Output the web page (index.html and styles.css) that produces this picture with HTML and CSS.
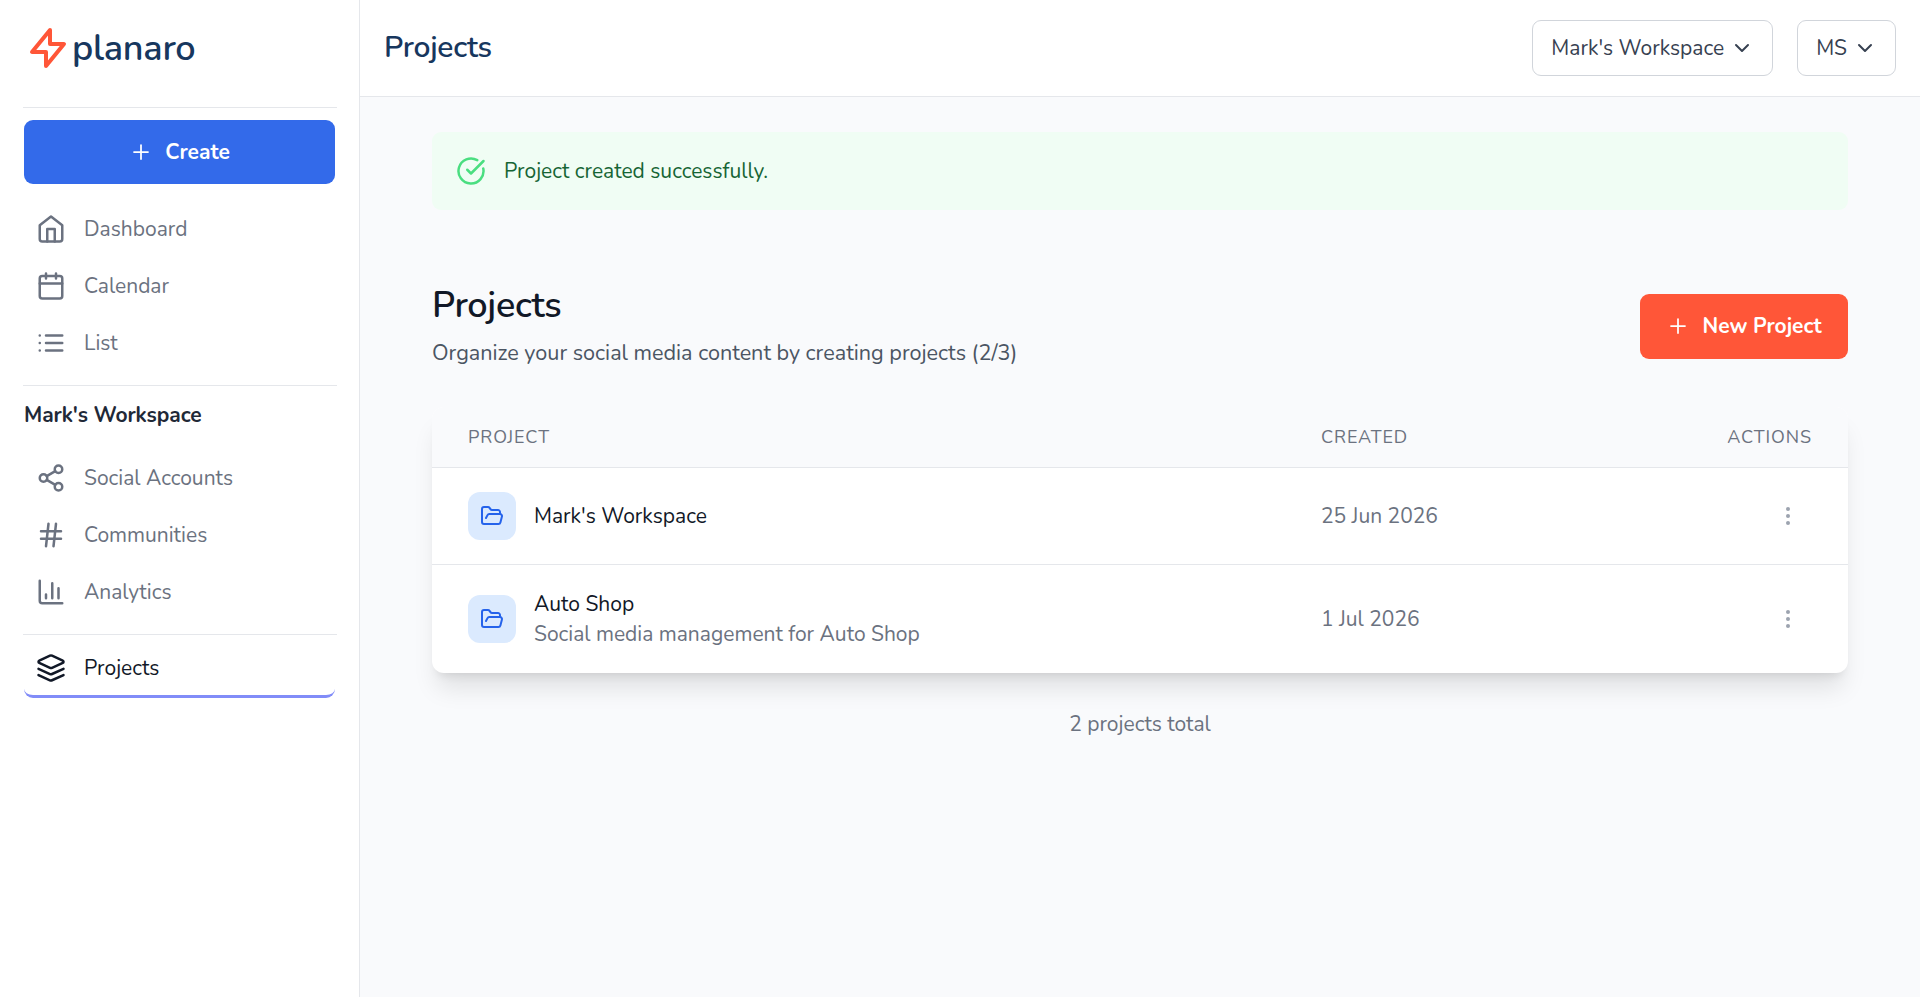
FILE: index.html
```html
<!DOCTYPE html>
<html lang="en">
<head>
    <meta charset="UTF-8">
    <meta name="viewport" content="width=device-width, initial-scale=1.0">
    <title>Projects</title>
    <link rel="stylesheet" href="styles.css">
</head>
<body>
    <aside class="sidebar">
        <a class="logo">
            <svg class="logo-icon" viewBox="0 0 24 24"><path d="M13 10V3L4 14h7v7l9-11h-7z"/></svg>
            <span class="logo-text">planaro</span>
        </a>
        <hr>
        <button class="btn btn-create">
            <svg viewBox="0 0 24 24"><path d="M5 12h14M12 5v14"/></svg>
            <span>Create</span>
        </button>
        <nav class="nav">
            <a class="nav-item">
                <svg viewBox="0 0 24 24"><path d="m3 9 9-7 9 7v11a2 2 0 0 1-2 2H5a2 2 0 0 1-2-2z"/><path d="M9 22V12h6v10"/></svg>
                <span>Dashboard</span>
            </a>
            <a class="nav-item">
                <svg viewBox="0 0 24 24"><rect x="3" y="4" width="18" height="18" rx="2"/><path d="M16 2v4M8 2v4M3 10h18"/></svg>
                <span>Calendar</span>
            </a>
            <a class="nav-item">
                <svg viewBox="0 0 24 24"><path d="M8 6h13M8 12h13M8 18h13M3 6h.01M3 12h.01M3 18h.01"/></svg>
                <span>List</span>
            </a>
        </nav>
        <hr>
        <h2 class="nav-heading">Mark's Workspace</h2>
        <nav class="nav nav-workspace">
            <a class="nav-item">
                <svg viewBox="0 0 24 24"><circle cx="18" cy="5" r="3"/><circle cx="6" cy="12" r="3"/><circle cx="18" cy="19" r="3"/><path d="m8.59 13.51 6.83 3.98M15.41 6.51l-6.82 3.98"/></svg>
                <span>Social Accounts</span>
            </a>
            <a class="nav-item">
                <svg viewBox="0 0 24 24"><path d="M4 9h16M4 15h16M10 3 8 21M16 3l-2 18"/></svg>
                <span>Communities</span>
            </a>
            <a class="nav-item">
                <svg viewBox="0 0 24 24"><path d="M3 3v16a2 2 0 0 0 2 2h16M18 17V9M13 17V5M8 17v-3"/></svg>
                <span>Analytics</span>
            </a>
        </nav>
        <hr>
        <nav class="nav nav-bottom">
            <a class="nav-item active">
                <svg viewBox="0 0 24 24"><path d="m12.83 2.18a2 2 0 0 0-1.66 0L2.6 6.08a1 1 0 0 0 0 1.83l8.58 3.91a2 2 0 0 0 1.66 0l8.58-3.9a1 1 0 0 0 0-1.83Z"/><path d="m22 12.65-9.17 4.16a2 2 0 0 1-1.66 0L2 12.65"/><path d="m22 17.65-9.17 4.16a2 2 0 0 1-1.66 0L2 17.65"/></svg>
                <span>Projects</span>
            </a>
        </nav>
    </aside>

    <div class="page">
        <header class="topbar">
            <h1>Projects</h1>
            <div class="topbar-menus">
                <button class="dropdown"><span>Mark's Workspace</span><svg viewBox="0 0 20 20"><path d="M4 7l6 6 6-6"/></svg></button>
                <button class="dropdown"><span>MS</span><svg viewBox="0 0 20 20"><path d="M4 7l6 6 6-6"/></svg></button>
            </div>
        </header>

        <main class="content">
            <div class="alert">
                <svg viewBox="0 0 24 24"><path d="M21.801 10A10 10 0 1 1 17 3.335"/><path d="m9 11 3 3L22 4"/></svg>
                <span>Project created successfully.</span>
            </div>

            <div class="page-head">
                <div>
                    <h2>Projects</h2>
                    <p>Organize your social media content by creating projects (2/3)</p>
                </div>
                <button class="btn btn-new">
                    <svg viewBox="0 0 24 24"><path d="M5 12h14M12 5v14"/></svg>
                    <span>New Project</span>
                </button>
            </div>

            <div class="table">
                <div class="row row-head">
                    <span>Project</span>
                    <span>Created</span>
                    <span class="actions">Actions</span>
                </div>
                <div class="row">
                    <div class="project">
                        <div class="tile"><svg viewBox="0 0 24 24"><path d="m6 14 1.5-2.9A2 2 0 0 1 9.24 10H20a2 2 0 0 1 1.94 2.5l-1.54 6a2 2 0 0 1-1.95 1.5H4a2 2 0 0 1-2-2V5a2 2 0 0 1 2-2h3.9a2 2 0 0 1 1.69.9l.81 1.2a2 2 0 0 0 1.67.9H18a2 2 0 0 1 2 2v2"/></svg></div>
                        <div class="project-name">Mark's Workspace</div>
                    </div>
                    <span class="date">25 Jun 2026</span>
                    <div class="actions"><svg class="dots" viewBox="0 0 24 24"><circle cx="12" cy="5" r="2"/><circle cx="12" cy="12" r="2"/><circle cx="12" cy="19" r="2"/></svg></div>
                </div>
                <div class="row">
                    <div class="project">
                        <div class="tile"><svg viewBox="0 0 24 24"><path d="m6 14 1.5-2.9A2 2 0 0 1 9.24 10H20a2 2 0 0 1 1.94 2.5l-1.54 6a2 2 0 0 1-1.95 1.5H4a2 2 0 0 1-2-2V5a2 2 0 0 1 2-2h3.9a2 2 0 0 1 1.69.9l.81 1.2a2 2 0 0 0 1.67.9H18a2 2 0 0 1 2 2v2"/></svg></div>
                        <div>
                            <div class="project-name">Auto Shop</div>
                            <div class="project-desc">Social media management for Auto Shop</div>
                        </div>
                    </div>
                    <span class="date">1 Jul 2026</span>
                    <div class="actions"><svg class="dots" viewBox="0 0 24 24"><circle cx="12" cy="5" r="2"/><circle cx="12" cy="12" r="2"/><circle cx="12" cy="19" r="2"/></svg></div>
                </div>
            </div>

            <p class="total">2 projects total</p>
        </main>
    </div>
</body>
</html>
```
FILE: styles.css
```css
* {
    box-sizing: border-box;
}
body {
    margin: 0;
    display: flex;
    min-height: 100vh;
    font-family: Nunito, Lato, sans-serif;
    font-size: 21px;
    line-height: 30px;
    color: #111827;
    background-color: #f9fafc;
}
h1, h2, p {
    margin: 0;
}
button {
    font: inherit;
}
svg {
    flex: none;
    fill: none;
    stroke: currentColor;
    stroke-width: 2;
    stroke-linecap: round;
    stroke-linejoin: round;
}
hr {
    width: 314px;
    height: 1px;
    margin: 0 -1px;
    border: 0;
    background-color: #e5e7eb;
}

/* Sidebar */
.sidebar {
    width: 360px;
    flex: none;
    padding: 0 24px;
    border-right: 1px solid #e5e7eb;
    background-color: #fff;
}
.logo {
    display: flex;
    align-items: center;
    height: 107px;
    padding-bottom: 11px;
}
.logo-icon {
    width: 48px;
    height: 48px;
    color: #ff5638;
}
.logo-text {
    padding-top: 2px;
    font-size: 36px;
    font-weight: 600;
    letter-spacing: -0.25px;
    color: #17375e;
}
.btn {
    display: flex;
    align-items: center;
    justify-content: center;
    gap: 12px;
    border: 0;
    border-radius: 9px;
    color: #fff;
    font-weight: 700;
}
.btn svg {
    width: 24px;
    height: 24px;
    stroke-width: 1.75;
}
.btn-create {
    width: 311px;
    height: 64px;
    margin: 12px 0 16px;
    background-color: #336aea;
}
.nav-item {
    display: flex;
    align-items: center;
    gap: 18px;
    height: 57px;
    padding-left: 12px;
    color: #6b7280;
}
.nav-item svg {
    width: 30px;
    height: 30px;
}
.nav-heading {
    margin: 14px 0 19px;
    font-size: 21px;
    letter-spacing: -0.1px;
    color: #1f2937;
}
.nav:first-of-type,
.nav-workspace {
    padding-bottom: 14px;
}
.nav-bottom {
    padding-top: 6px;
}
.nav-item.active {
    width: 311px;
    height: 57px;
    border-bottom: 3px solid #818cf8;
    border-radius: 9px;
    color: #111827;
}

/* Top bar */
.page {
    flex: 1;
}
.topbar {
    display: flex;
    align-items: center;
    justify-content: space-between;
    height: 97px;
    padding: 0 24px;
    border-bottom: 1px solid #e5e7eb;
    background-color: #fff;
}
.topbar h1 {
    font-size: 30px;
    font-weight: 600;
    letter-spacing: -0.25px;
    color: #17375e;
}
.topbar-menus {
    display: flex;
    gap: 24px;
}
.dropdown {
    display: flex;
    align-items: center;
    gap: 8px;
    height: 56px;
    padding: 0 20px 0 18px;
    border: 1px solid #d1d5db;
    border-radius: 9px;
    color: #374151;
    background-color: #fff;
}
.dropdown svg {
    width: 20px;
    height: 20px;
}

/* Content */
.content {
    padding: 35px 72px 0;
}
.alert {
    display: flex;
    align-items: center;
    gap: 18px;
    height: 78px;
    padding: 0 24px;
    border-radius: 9px;
    color: #166534;
    background-color: #f0fdf4;
}
.alert svg {
    width: 30px;
    height: 30px;
    color: #4ade80;
}
.page-head {
    display: flex;
    align-items: center;
    justify-content: space-between;
    margin: 72px 0 37px;
}
.page-head h2 {
    font-size: 36px;
    font-weight: 600;
    line-height: 48px;
    letter-spacing: -0.3px;
}
.page-head p {
    margin-top: 8px;
    padding-bottom: 2px;
    font-size: 21.6px;
    color: #4b5563;
}
.btn-new {
    width: 208px;
    height: 65px;
    background-color: #ff5638;
}
.table {
    overflow: hidden;
    border-radius: 12px;
    background-color: #fff;
    box-shadow: 0 20px 25px -5px rgba(0, 0, 0, 0.1), 0 8px 10px -6px rgba(0, 0, 0, 0.1);
}
.row {
    display: grid;
    grid-template-columns: 853px 1fr 1fr;
    align-items: center;
    padding: 24px 36px;
}
.row + .row {
    border-top: 1px solid #e5e7eb;
}
.row-head {
    height: 60px;
    padding: 0 36px;
    font-size: 18px;
    letter-spacing: 0.9px;
    text-transform: uppercase;
    color: #6b7280;
    background-color: #f9fafc;
}
.project {
    display: flex;
    align-items: center;
    gap: 18px;
}
.tile {
    display: flex;
    align-items: center;
    justify-content: center;
    width: 48px;
    height: 48px;
    border-radius: 12px;
    color: #2563eb;
    background-color: #dbeafe;
}
.tile svg {
    width: 24px;
    height: 24px;
}
.project-desc, .date {
    color: #6b7280;
}
.actions {
    text-align: right;
}
.dots {
    display: block;
    width: 24px;
    height: 24px;
    margin-left: auto;
    margin-right: 12px;
    fill: #9ca3af;
    stroke: none;
}
.total {
    margin-top: 36px;
    text-align: center;
    color: #6b7280;
}
```
